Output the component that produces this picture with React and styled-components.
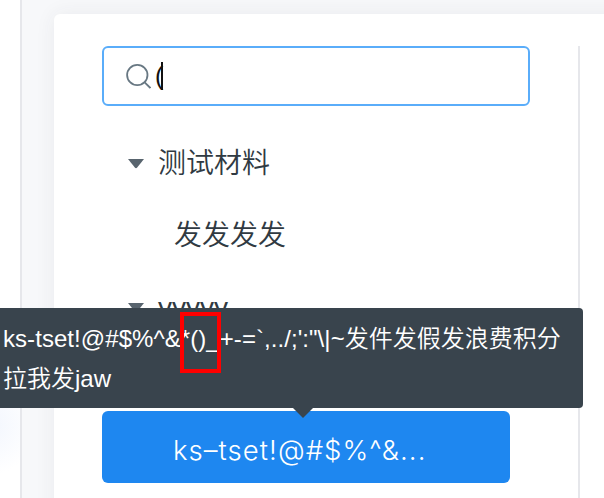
import React from "react";
import styled, { createGlobalStyle } from "styled-components";

const GlobalStyle = createGlobalStyle`
  * { box-sizing: border-box; }
  body {
    margin: 0;
    overflow: hidden;
    background: #f7f8fa;
    font-family: "Liberation Sans", "Noto Sans CJK SC", sans-serif;
    color: #303a42;
  }
`;

const Page = styled.div`
  position: relative;
  display: flex;
  width: 604px;
  height: 498px;
  overflow: hidden;
`;

const Sidebar = styled.aside`
  flex: none;
  width: 22px;
  border-right: 2px solid #e6e7eb;
  background: radial-gradient(circle at -12px 425px, #f2f6fe 0, #ffffff 50px);
`;

const Card = styled.main`
  display: flex;
  flex: none;
  width: 640px;
  height: 560px;
  margin: 14px 0 0 32px;
  padding: 32px 0 0 48px;
  border-radius: 6px;
  background: #fff;
  box-shadow: 0 0 20px rgba(50, 60, 70, 0.07);
`;

const TreePanel = styled.section`
  flex: none;
  width: 478px;
  border-right: 2px solid #e6e7eb;
`;

const SearchBox = styled.label`
  display: flex;
  align-items: center;
  width: 428px;
  height: 60px;
  padding-left: 21px;
  border: 2px solid #5aadfa;
  border-radius: 6px;
`;

const SearchIcon = styled.svg`
  flex: none;
  width: 26px;
  height: 26px;
  margin: 0 1px 1px 0;
  fill: none;
  stroke: #687883;
  stroke-width: 1.8;
`;

const Query = styled.span`
  width: 9px;
  padding-left: 3px;
  font-size: 25px;
  line-height: 30px;
  color: #111;
`;

const Caret = styled.i`
  width: 2px;
  height: 28px;
  background: #111;
`;

const Tree = styled.div`
  display: flex;
  flex-direction: column;
  padding-top: 20px;
`;

const TreeRow = styled.div`
  display: flex;
  align-items: center;
  height: 72px;
  padding: 4px 0 0 ${(p) => (p.$leaf ? 72 : 26)}px;
  font-size: 28px;
  font-weight: 350;
  line-height: 40px;
`;

const Toggle = styled.svg`
  flex: none;
  width: 16px;
  height: 10px;
  margin: 0 14px 0 0;
  fill: #58646e;
`;

const SelectedItem = styled.div`
  width: 408px;
  height: 72px;
  margin-top: 69px;
  padding: 3px 0 0 71px;
  border-radius: 6px;
  background: #1e87f0;
  color: #fff;
  font-family: Inter, sans-serif;
  font-size: 27.5px;
  font-weight: 300;
  line-height: 72px;
  white-space: nowrap;
  letter-spacing: ${(p) => p.$tracking}px;
`;

const Tooltip = styled.div`
  position: absolute;
  left: -17px;
  top: 308px;
  width: 600px;
  height: 100px;
  padding: 11px 20px;
  border-radius: 4px;
  background: #39444d;
  color: #fff;
  font-size: 24px;
  font-weight: 350;
  line-height: 40px;
  white-space: nowrap;

  &::after {
    content: "";
    position: absolute;
    left: 310px;
    top: 100px;
    border: solid transparent;
    border-width: 10px 10px 0;
    border-top-color: #39444d;
  }
`;

const Latin = styled.span`
  letter-spacing: ${(p) => p.$tracking || 0}px;
`;

const Highlight = styled.div`
  position: absolute;
  left: 180px;
  top: 312px;
  width: 41px;
  height: 61px;
  border: 4px solid #fe0000;
`;

const Arrow = () => (
  <Toggle viewBox="0 0 16 10">
    <path d="M0 0H16L9.2 8.6Q8 9.8 6.8 8.6Z" />
  </Toggle>
);

export default function App() {
  return (
    <>
      <GlobalStyle />
      <Page>
        <Sidebar />
        <Card>
          <TreePanel>
            <SearchBox>
              <SearchIcon viewBox="0 0 26 26">
                <circle cx="12.3" cy="12" r="10.2" />
                <path d="M19.4 19.2L25.4 25" />
              </SearchIcon>
              <Query>(</Query>
              <Caret />
            </SearchBox>
            <Tree>
              <TreeRow><Arrow />测试材料</TreeRow>
              <TreeRow $leaf>发发发发</TreeRow>
              <TreeRow><Arrow />yyyyy</TreeRow>
            </Tree>
            <SelectedItem $tracking={1.05}>ks–tset!@#$%^&amp;...</SelectedItem>
          </TreePanel>
        </Card>
        <Tooltip>
          <div><Latin $tracking={0.06}>{"ks-tset!@#$%^&*()_+-=`,../;':\"\\|~"}</Latin>发件发假发浪费积分</div>
          <div>拉我发<Latin>jaw</Latin></div>
        </Tooltip>
        <Highlight />
      </Page>
    </>
  );
}
